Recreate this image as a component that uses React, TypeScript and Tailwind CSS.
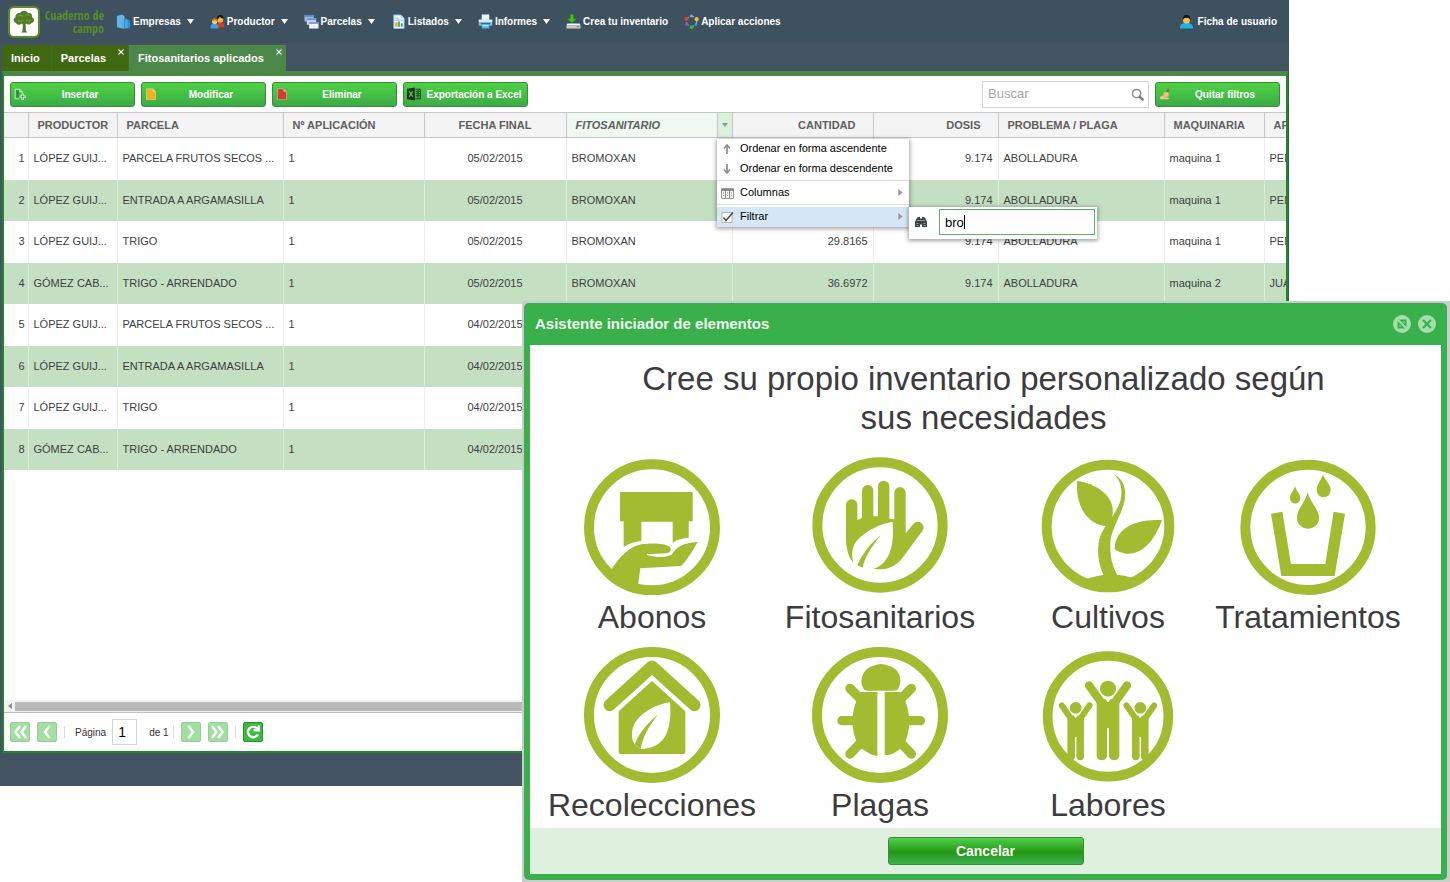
import { useState } from 'react';
import type { ReactNode } from 'react';
import clsx from 'clsx';

type Align = 'left' | 'center' | 'right';

interface Column {
  key: string;
  label: string;
  width: number;
  align: Align;
  active?: boolean;
}

interface Row {
  productor: string;
  parcela: string;
  aplicacion: string;
  fecha: string;
  fito?: string;
  cantidad?: string;
  dosis?: string;
  problema?: string;
  maquinaria?: string;
  aplicador?: string;
}

const COLUMNS: Column[] = [
  { key: 'productor', label: 'PRODUCTOR', width: 89, align: 'left' },
  { key: 'parcela', label: 'PARCELA', width: 166, align: 'left' },
  { key: 'aplicacion', label: 'Nº APLICACIÓN', width: 141, align: 'left' },
  { key: 'fecha', label: 'FECHA FINAL', width: 142, align: 'center' },
  { key: 'fito', label: 'FITOSANITARIO', width: 166, align: 'left', active: true },
  { key: 'cantidad', label: 'CANTIDAD', width: 141, align: 'right' },
  { key: 'dosis', label: 'DOSIS', width: 125, align: 'right' },
  { key: 'problema', label: 'PROBLEMA / PLAGA', width: 166, align: 'left' },
  { key: 'maquinaria', label: 'MAQUINARIA', width: 100, align: 'left' },
  { key: 'aplicador', label: 'APLICADOR', width: 110, align: 'left' },
];

const LOPEZ = 'LÓPEZ GUIJ...';
const GOMEZ = 'GÓMEZ CAB...';
const FRUTOS = 'PARCELA FRUTOS SECOS ...';

const ROWS: Row[] = [
  { productor: LOPEZ, parcela: FRUTOS, aplicacion: '1', fecha: '05/02/2015', fito: 'BROMOXAN', dosis: '9.174', problema: 'ABOLLADURA', maquinaria: 'maquina 1', aplicador: 'PEDRO' },
  { productor: LOPEZ, parcela: 'ENTRADA A ARGAMASILLA', aplicacion: '1', fecha: '05/02/2015', fito: 'BROMOXAN', dosis: '9.174', problema: 'ABOLLADURA', maquinaria: 'maquina 1', aplicador: 'PEDRO' },
  { productor: LOPEZ, parcela: 'TRIGO', aplicacion: '1', fecha: '05/02/2015', fito: 'BROMOXAN', cantidad: '29.8165', dosis: '9.174', problema: 'ABOLLADURA', maquinaria: 'maquina 1', aplicador: 'PEDRO' },
  { productor: GOMEZ, parcela: 'TRIGO - ARRENDADO', aplicacion: '1', fecha: '05/02/2015', fito: 'BROMOXAN', cantidad: '36.6972', dosis: '9.174', problema: 'ABOLLADURA', maquinaria: 'maquina 2', aplicador: 'JUAN' },
  { productor: LOPEZ, parcela: FRUTOS, aplicacion: '1', fecha: '04/02/2015' },
  { productor: LOPEZ, parcela: 'ENTRADA A ARGAMASILLA', aplicacion: '1', fecha: '04/02/2015' },
  { productor: LOPEZ, parcela: 'TRIGO', aplicacion: '1', fecha: '04/02/2015' },
  { productor: GOMEZ, parcela: 'TRIGO - ARRENDADO', aplicacion: '1', fecha: '04/02/2015' },
];

const ALIGN: Record<Align, string> = {
  left: 'text-left',
  center: 'text-center',
  right: 'text-right',
};

/* ---------- small icons ---------- */

function Icon({ children, className = 'size-[15px]' }: { children: ReactNode; className?: string }) {
  return (
    <svg viewBox="0 0 16 16" className={clsx('shrink-0', className)} aria-hidden="true">
      {children}
    </svg>
  );
}

const BuildingIcon = () => (
  <Icon>
    <path d="M1 2l6-1.500v15L1 14z" fill="#5db8ee" />
    <path d="M7 .5L9 3v12.500H7z" fill="#8fd2f6" />
    <path d="M8 4l5 1.500 2 2.500v7.500H8z" fill="#2b8fd0" />
    <path d="M9.500 6l3 1v8h-3z" fill="#4aa9e4" />
  </Icon>
);

const PeopleIcon = () => (
  <Icon>
    <path d="M7.500 14c0-4 1-5 3.500-5s4.500 1 4.500 5z" fill="#e23b1c" />
    <circle cx="11" cy="6" r="3.200" fill="#f4b04a" />
    <path d="M7.500 6c0-4 2-5 3.500-5s3.600 1 3.500 4c-2 0-3-1-4-2-1 1-1 2-3 3z" fill="#1d120c" />
    <path d="M.5 15.500c0-4 1.500-5 4-5s4.500 1 4.500 5z" fill="#3aa0e6" />
    <circle cx="5" cy="8" r="2.800" fill="#fbc766" />
    <path d="M2 7.500C2.200 5 3.500 4.400 5 4.400s3 1 3 3C6 7.500 6 6.500 5 6.300 4 6.500 3.500 7.500 2 7.500z" fill="#c2751c" />
  </Icon>
);

const WindowsIcon = () => (
  <Icon>
    <path d="M.5 1h10v7H.5z" fill="#9fb8dc" />
    <path d="M.5 1h10v2H.5z" fill="#5f86c4" />
    <path d="M3 4.500h10v7H3z" fill="#c6d5ec" />
    <path d="M3 4.500h10v2H3z" fill="#6b90ca" />
    <path d="M5.500 8.500h10v7h-10z" fill="#eef3fa" />
    <path d="M5.500 8.500h10v2h-10z" fill="#7397cf" />
  </Icon>
);

const ReportIcon = () => (
  <Icon>
    <path d="M3 1h7.500L14 4.500v11H3z" fill="#f4fafe" stroke="#7db9e2" />
    <path d="M10.500 1v3.500H14" fill="#b8dcf3" />
    <path d="M4.500 4.500h4M4.500 6.500h8" stroke="#7db9e2" />
    <path d="M4.500 9H7v4.500H4.500z" fill="#e8a32b" />
    <path d="M7.500 8h2v5.500h-2z" fill="#4caf3c" />
    <path d="M10.500 10h2v3.500h-2z" fill="#3a86d0" />
  </Icon>
);

const PrinterIcon = () => (
  <Icon>
    <path d="M4 .5h8V7H4z" fill="#e9f5fd" />
    <path d="M.8 6h14.400v6.500H.8z" fill="#8bb8de" />
    <path d="M.8 6h14.400v2.500H.8z" fill="#dce9f5" />
    <path d="M3 9.500h10V11H3z" fill="#2d6ba8" />
    <path d="M4 11h8v4.500H4z" fill="#4fb6ee" />
    <path d="M5 12.500h6" stroke="#fff" />
  </Icon>
);

const DownloadIcon = () => (
  <Icon>
    <path d="M4.500 .5h3.500v4.500h3L6.250 9.500 1.500 5h3z" fill="#3fc41e" stroke="#2a8d14" strokeWidth=".5" />
    <path d="M1.500 10h13l1 2H.5z" fill="#f7f7f7" />
    <path d="M.5 12h15v3.500H.5z" fill="#c9ccce" />
    <path d="M11.500 13.500h2.500" stroke="#4caf3c" strokeWidth="1.300" />
  </Icon>
);

const CycleIcon = () => (
  <Icon>
    <circle cx="8" cy="8" r="5.500" fill="none" stroke="#7eb6e8" strokeWidth="1.500" strokeDasharray="4 2" />
    <circle cx="2.500" cy="5" r="2.200" fill="#e4402c" />
    <circle cx="8" cy="2" r="1.500" fill="#79b4ea" />
    <circle cx="13.500" cy="5.500" r="2.200" fill="#f2c428" />
    <circle cx="12.500" cy="11.500" r="1.600" fill="#4688d8" />
    <circle cx="8" cy="14" r="2" fill="#3fae32" />
    <circle cx="2.800" cy="11" r="1.600" fill="#7b62c8" />
  </Icon>
);

const UserIcon = () => (
  <Icon>
    <path d="M1 15.500C1 10.500 4 9.500 8 9.500s7 1 7 6z" fill="#1cb5e4" />
    <circle cx="8" cy="6.500" r="3.800" fill="#fbb95a" />
    <path d="M4 6.500C3.600 2 6 1 8 1s5 1 4 5.500C11.500 5 10.500 4.200 8.500 4 6 4.200 5 4.500 4 6.500z" fill="#17120f" />
  </Icon>
);

const FileIcon = ({ fill, fold }: { fill: string; fold: string }) => (
  <Icon className="size-3">
    <path d="M2 1h8l4 4v10.500H2z" fill={fill} stroke="#fff" strokeOpacity=".45" />
    <path d="M10 1v4h4z" fill={fold} />
  </Icon>
);

const InsertIcon = () => (
  <Icon className="size-3">
    <path d="M1.500 1.500h6l3.500 3.500v2.500M7 14.500H1.500v-13M7.500 1.500V5H11" fill="none" stroke="#c8f2c0" strokeWidth="1.200" />
    <path d="M3 3h3.500v9.500H3z" fill="#2d8b3b" />
    <path d="M11.500 7.500v8M7.500 11.500h8" stroke="#e2fadd" strokeWidth="3" />
    <path d="M11.500 8.500v6M8.500 11.500h6" stroke="#3d9a45" />
  </Icon>
);

const ExcelIcon = () => (
  <Icon className="size-[14px]">
    <path d="M0 2l9-1.500v15L0 14z" fill="#20351f" />
    <path d="M2.500 5l4 6M6.500 5l-4 6" stroke="#58c94e" strokeWidth="1.400" />
    <path d="M9.500 2.500h6v11h-6" fill="none" stroke="#20351f" />
    <path d="M10 5h5M10 7.500h5M10 10h5M12.500 3v10" stroke="#20351f" />
  </Icon>
);

const BroomIcon = () => (
  <Icon className="size-3">
    <path d="M11.500 1l2.500-.5L12.500 6 9.500 5z" fill="#c0502a" />
    <path d="M7 6l5.500-.5L13 11l-3 1.500 4 1-2 1.500H2L1 12l4-2z" fill="#f5c982" />
    <path d="M5 11l4-3M7 13.500l4-3" stroke="#c98a3d" />
  </Icon>
);

const TreeLogo = () => (
  <svg viewBox="0 0 32 32" className="size-8 shrink-0" aria-hidden="true">
    <rect x="1" y="1" width="30" height="30" rx="5" fill="#fff" stroke="#5b8c28" strokeWidth="2" />
    <path d="M15 17h2.500l.5 8 1.500 1.500h-6.500L14.500 25z" fill="#55762f" />
    <path d="M8 17c-3-1-3-5-.5-5.500C7 8 10 6.500 12 7c1.500-3 6.500-3 8 0 3-.5 5 2 4 4.500 3 1 2.500 5-.5 5.500-1.500 2-4 2-5.500.5-1 1.500-3.500 1.500-4.500 0C12 19.500 9 19 8 17z" fill="#4f7f22" />
    <path d="M10 10c2-1 4-.5 5 .5M17 9c2-1 4 0 5 1M10 14.500c2 1 4 1 5-.5M18 14c2 1.500 4 1 5 0" fill="none" stroke="#86a95c" strokeWidth=".8" />
  </svg>
);

/* ---------- top bar ---------- */

const NAV = [
  { label: 'Empresas', icon: BuildingIcon, menu: true },
  { label: 'Productor', icon: PeopleIcon, menu: true },
  { label: 'Parcelas', icon: WindowsIcon, menu: true },
  { label: 'Listados', icon: ReportIcon, menu: true },
  { label: 'Informes', icon: PrinterIcon, menu: true },
  { label: 'Crea tu inventario', icon: DownloadIcon, menu: false },
  { label: 'Aplicar acciones', icon: CycleIcon, menu: false },
];

function TopBar() {
  return (
    <header className="flex h-[43px] shrink-0 items-center bg-[#3d515f] pr-3 pl-2 text-[10px] font-bold text-white">
      <div className="flex w-[108px] items-center gap-[3px]">
        <TreeLogo />
        <div className="w-[61px] text-right font-['Open_Sans_Condensed','Lato',sans-serif] text-[12px] leading-[13px] font-bold whitespace-nowrap text-[#5b8c28]">
          <div>Cuaderno de</div>
          <div>campo</div>
        </div>
      </div>
      <nav className="flex items-center gap-4">
        {NAV.map(({ label, icon: NavIcon, menu }) => (
          <button key={label} type="button" className="flex items-center whitespace-nowrap">
            <NavIcon />
            <span className="ml-[2px]">{label}</span>
            {menu && (
              <svg viewBox="0 0 7 5" className="ml-[6px] h-[5px] w-[7px]" aria-hidden="true">
                <path d="M0 0h7L3.500 5z" fill="#fff" />
              </svg>
            )}
          </button>
        ))}
      </nav>
      <button type="button" className="ml-auto flex items-center gap-1 whitespace-nowrap">
        <UserIcon />
        Ficha de usuario
      </button>
    </header>
  );
}

function Tab({ label, active, closable }: { label: string; active?: boolean; closable?: boolean }) {
  return (
    <div className={clsx('relative flex items-center', active ? 'bg-[#4b8748]' : 'border-r border-[#4a6a2a] bg-[#406812]')}>
      <button type="button" className={clsx('h-full pl-[9px] text-[11px] font-bold text-white', closable ? 'pr-[22px]' : 'pr-[11px]')}>
        {label}
      </button>
      {closable && (
        <button type="button" aria-label={`Cerrar ${label}`} className="absolute top-1 right-1">
          <svg viewBox="0 0 6 6" className="size-[6px]" aria-hidden="true">
            <path d="M.5.5l5 5M5.500.5l-5 5" stroke="#fff" strokeWidth="1.100" />
          </svg>
        </button>
      )}
    </div>
  );
}

/* ---------- toolbar ---------- */

function ToolButton({ label, icon }: { label: string; icon: ReactNode }) {
  return (
    <button
      type="button"
      className="flex h-[25px] w-[125px] shrink-0 items-center rounded-[3px] border border-[#3c8a3c] bg-linear-to-b from-[#4fd344] to-[#3bab46] pl-[3px] text-[10px] font-bold text-white"
    >
      {icon}
      <span className="flex-1 text-center whitespace-nowrap">{label}</span>
    </button>
  );
}

function Toolbar() {
  return (
    <div className="flex h-9 shrink-0 items-center gap-[6px] px-[6px]">
      <ToolButton label="Insertar" icon={<InsertIcon />} />
      <ToolButton label="Modificar" icon={<FileIcon fill="#f2b01e" fold="#fbe09a" />} />
      <ToolButton label="Eliminar" icon={<FileIcon fill="#d23f31" fold="#f0a79f" />} />
      <ToolButton label="Exportación a Excel" icon={<ExcelIcon />} />
      <label className="ml-auto flex h-[27px] w-[167px] items-center border border-[#d5d5d5] bg-white pr-1 pl-[5px]">
        <input
          type="text"
          aria-label="Buscar"
          placeholder="Buscar"
          className="min-w-0 flex-1 text-[13px] outline-none placeholder:text-[#a5a5a5]"
        />
        <svg viewBox="0 0 14 14" className="size-[13px]" aria-hidden="true">
          <circle cx="6" cy="6" r="4.500" fill="none" stroke="#8c8c8c" strokeWidth="1.600" />
          <path d="M9.500 9.500l3 3" stroke="#777" strokeWidth="2.600" strokeLinecap="round" />
        </svg>
      </label>
      <ToolButton label="Quitar filtros" icon={<BroomIcon />} />
    </div>
  );
}

/* ---------- grid ---------- */

function Grid() {
  return (
    <table className="w-[1370px] table-fixed border-collapse text-[11px] text-[#404040]">
      <colgroup>
        <col style={{ width: 24 }} />
        {COLUMNS.map((c) => (
          <col key={c.key} style={{ width: c.width }} />
        ))}
      </colgroup>
      <thead>
        <tr className="h-[26px] bg-[#f4f4f4] text-[#606060] shadow-[inset_0_1px_0_#c5c5c5,inset_0_-1px_0_#c5c5c5]">
          <th className="border-r border-[#c5c5c5]" />
          {COLUMNS.map((c) => (
            <th
              key={c.key}
              className={clsx(
                'border-r border-[#c5c5c5] p-0 font-bold whitespace-nowrap',
                ALIGN[c.align],
                c.active && 'bg-[#eefaf0] italic shadow-[inset_0_1px_0_#c5c5c5,inset_0_-1px_0_#c5c5c5]',
              )}
            >
              {c.active ? (
                <div className="flex h-[26px] items-center justify-between pl-[9px]">
                  {c.label}
                  <button type="button" aria-label="Opciones de columna" className="grid h-6 w-[15px] place-items-center border-l border-[#c5c5c5] bg-[#dcf0de]">
                    <svg viewBox="0 0 6 4" className="h-1 w-[6px]" aria-hidden="true">
                      <path d="M0 0h6L3 4z" fill="#8a9a8a" />
                    </svg>
                  </button>
                </div>
              ) : (
                <div className={c.align === 'right' ? 'pr-[17px]' : c.align === 'left' ? 'pl-[9px]' : ''}>{c.label}</div>
              )}
            </th>
          ))}
        </tr>
      </thead>
      <tbody>
        {ROWS.map((row, i) => (
          <tr key={i} className={i % 2 ? 'h-[41px] bg-[#c5dfc3]' : 'h-[42px] bg-white'}>
            <td className={clsx('border-r p-0 pr-[3px] pb-px text-right', i % 2 ? 'border-[#dcebdb]' : 'border-[#ededed]')}>{i + 1}</td>
            {COLUMNS.map((c) => (
              <td
                key={c.key}
                className={clsx('truncate border-r p-0 px-[5px] pb-px', ALIGN[c.align], i % 2 ? 'border-[#dcebdb]' : 'border-[#ededed]')}
              >
                {row[c.key as keyof Row]}
              </td>
            ))}
          </tr>
        ))}
      </tbody>
    </table>
  );
}

const SubArrow = () => (
  <svg viewBox="0 0 5 8" className="ml-auto h-[7px] w-[5px]" aria-hidden="true">
    <path d="M0 0l5 4-5 4z" fill="#9a9a9a" />
  </svg>
);

function ColumnMenu() {
  const [filter, setFilter] = useState('bro');
  const item = 'flex h-5 w-full items-center pr-[6px] pb-px pl-1 text-left text-black';

  return (
    <div className="absolute top-[27px] left-[713px] z-10 flex items-end text-[11px]">
      <div className="w-48 bg-white shadow-[0_1px_4px_1px_rgba(0,0,0,0.35)]">
        <button type="button" className={item}>
          <svg viewBox="0 0 12 12" className="mr-[7px] size-3" aria-hidden="true">
            <path d="M6 11V3M3 5.500L6 2l3 3.500" fill="none" stroke="#8e8e8e" strokeWidth="1.700" />
          </svg>
          Ordenar en forma ascendente
        </button>
        <button type="button" className={item}>
          <svg viewBox="0 0 12 12" className="mr-[7px] size-3" aria-hidden="true">
            <path d="M6 1v8M3 6.500L6 10l3-3.500" fill="none" stroke="#8e8e8e" strokeWidth="1.700" />
          </svg>
          Ordenar en forma descendente
        </button>
        <hr className="mt-px mb-[2px] border-[#dcdcdc]" />
        <button type="button" className={item}>
          <svg viewBox="0 0 13 12" className="mr-[6px] h-3 w-[13px]" aria-hidden="true">
            <path d="M.5 1.500h12v10H.5z" fill="#f5f5f5" stroke="#9a9a9a" />
            <path d="M.5 3h12" stroke="#8a8a8a" strokeWidth="2" />
            <path d="M4.500 3v8M8.500 3v8M2 6h1M2 8.500h1M6 6h1M6 8.500h1M10 6h1M10 8.500h1" stroke="#8a8a8a" />
          </svg>
          Columnas
          <SubArrow />
        </button>
        <hr className="mt-px mb-[2px] border-[#dcdcdc]" />
        <button type="button" className={clsx(item, 'bg-[#d5e6f4]')}>
          <svg viewBox="0 0 13 12" className="mr-[6px] h-3 w-[13px]" aria-hidden="true">
            <path d="M1 1.500h10v10H1z" fill="#fff" stroke="#b4b4b4" />
            <path d="M2.500 6.500L5 9.500 12 1.500" fill="none" stroke="#4a4a4a" strokeWidth="1.600" />
          </svg>
          Filtrar
          <SubArrow />
        </button>
      </div>
      <label className="-mb-3 flex h-8 w-[188px] items-start bg-white pt-[2px] pr-[2px] shadow-[0_1px_4px_1px_rgba(0,0,0,0.35)]">
        <svg viewBox="0 0 12 12" className="mx-[6px] mt-[7px] size-3 shrink-0" aria-hidden="true">
          <path d="M1.500 2.500L3 1h2v1.500h2V1h2l1.500 1.500L12 6v5H7V8.500H5V11H0V6z" fill="#3b4248" />
          <path d="M1.500 7.500h2M8.500 7.500h2M1.500 9.500h2M8.500 9.500h2M2 4.500h8" stroke="#9aa4ac" strokeWidth=".9" />
        </svg>
        <span className="relative ml-[6px] flex min-w-0 flex-1">
          <input
            type="text"
            aria-label="Filtrar fitosanitario"
            value={filter}
            onChange={(e) => setFilter(e.target.value)}
            className="h-[26px] w-full border border-[#5ab56a] bg-white pl-[5px] text-[13px] text-black caret-transparent outline-none"
          />
          <span className="absolute top-[6px] left-[25px] h-[14px] w-px bg-black" />
        </span>
      </label>
    </div>
  );
}

/* ---------- pager ---------- */

function PagerButton({ label, path, enabled }: { label: string; path: string; enabled?: boolean }) {
  return (
    <button
      type="button"
      aria-label={label}
      className={clsx(
        'grid size-5 place-items-center rounded-[2px] border',
        enabled ? 'border-[#2f8a35] bg-[#3dbb40]' : 'border-[#9fc8a0] bg-[#a2dfa3]',
      )}
    >
      <svg viewBox="0 0 16 16" className="size-4" aria-hidden="true">
        <path d={path} fill="none" stroke="#fff" strokeWidth="2.400" />
      </svg>
    </button>
  );
}

const Divider = () => <span className="h-3 w-px bg-[#dadada]" />;

function Pager() {
  return (
    <footer className="flex h-[39px] shrink-0 items-center border-t border-[#c0c0c0] bg-white px-[6px] text-[10px] text-[#333]">
      <div className="flex items-center gap-[7px]">
        <PagerButton label="Primera página" path="M8 2L3.500 8 8 14M14 2L9.500 8l4.500 6" />
        <PagerButton label="Página anterior" path="M10.500 2L6 8l4.500 6" />
        <Divider />
      </div>
      <label className="ml-[10px] flex items-center gap-[6px]">
        Página
        <input type="text" defaultValue="1" className="h-[26px] w-[25px] border border-[#d5d5d5] pl-[5px] text-[14px] text-black outline-none" />
      </label>
      <span className="ml-3">de 1</span>
      <div className="ml-1 flex items-center gap-[7px]">
        <Divider />
        <PagerButton label="Página siguiente" path="M5.500 2L10 8l-4.500 6" />
        <PagerButton label="Última página" path="M2 2l4.500 6L2 14M8 2l4.500 6L8 14" />
        <Divider />
        <PagerButton label="Actualizar" path="M12.300 4.800A5.200 5.200 0 1 0 12.800 10.500M13.800 1.500V6.300H8.500" enabled />
      </div>
    </footer>
  );
}

/* ---------- inventory wizard ---------- */

const GREEN = '#a2bb31';

const AbonosArt = () => (
  <svg viewBox="43 57 408 408" className="size-[136px]" aria-hidden="true">
    <circle cx="247" cy="262" r="189" fill="none" stroke={GREEN} strokeWidth="30" />
    <g fill={GREEN}>
      <path d="M151 156H369V244H357V294Q330 294 309 308V245H215V303Q184 306 162 321V244H151z" />
      <path d="M122 394C150 348 180 320 215 313C250 308 285 310 300 320C308 330 300 338 290 340L234 343C260 350 290 350 306 344C320 322 340 308 384 306C370 330 350 365 334 378L212 385L205 436C196 450 160 440 122 394z" />
    </g>
    <path d="M232 343C262 350 296 352 305 338" fill="none" stroke="#fff" strokeWidth="4" />
  </svg>
);

const FitosanitariosArt = () => (
  <svg viewBox="726 57 408 408" className="size-[136px] overflow-visible" aria-hidden="true">
    <circle cx="930" cy="255" r="188" fill="none" stroke={GREEN} strokeWidth="30" />
    <path
      d="M828 195a17 17 0 0 1 34 0V240L876 234V152a17 17 0 0 1 34 0V229H924V139a17 17 0 0 1 34 0V236L973 238V158a17 17 0 0 1 34 0V280L1030 252a17 17 0 0 1 27 21L1000 350C975 385 940 392 912 386L848 366C830 345 828 310 828 290z"
      fill={GREEN}
    />
    <path d="M968 246C930 250 870 280 852 315C845 335 845 350 850 368L862 376L885 384L911 386C945 375 975 340 968 246z" fill="#fff" />
    <path d="M932 286C905 305 875 345 862 376L878 383C884 352 905 320 932 286z" fill={GREEN} />
  </svg>
);

const CultivosArt = () => (
  <svg viewBox="92 57 408 408" className="size-[136px]" aria-hidden="true">
    <circle cx="296" cy="258" r="184" fill="none" stroke={GREEN} strokeWidth="30" />
    <g fill={GREEN}>
      <path d="M204 122C260 132 315 165 310 220Q308 240 300 258C240 262 195 200 204 122z" />
      <path d="M458 240C440 290 405 345 350 341Q325 337 316 327C315 285 350 235 458 240z" />
      <path d="M314 102C342 118 352 145 346 180C338 225 305 265 303 310C302 350 308 380 325 406H283C265 370 262 325 272 290C285 255 320 225 334 180C340 145 334 122 314 102z" />
      <path d="M230 418Q262 404 300 404Q340 403 372 414Q340 440 296 440Q260 438 230 418z" />
    </g>
  </svg>
);

const TratamientosArt = () => (
  <svg viewBox="689 57 408 408" className="size-[136px]" aria-hidden="true">
    <circle cx="893" cy="262" r="188" fill="none" stroke={GREEN} strokeWidth="30" />
    <g fill={GREEN}>
      <path d="M782 221L816 215L842 372H945L970 215L1004 221L973 408H813z" />
      <path d="M892 155C897 185 926 205 926 235a33 31 0 0 1-66 0C860 205 887 185 892 155z" />
      <path d="M854 137C857 153 870 160 870 174a15 16 0 0 1-31 0C839 160 851 153 854 137z" />
      <path d="M938 102C942 120 961 132 961 150a21 22 0 0 1-42 0C919 132 934 120 938 102z" />
    </g>
  </svg>
);

const RecoleccionesArt = () => (
  <svg viewBox="136 36 408 408" className="size-[136px]" aria-hidden="true">
    <circle cx="340" cy="240" r="189" fill="none" stroke={GREEN} strokeWidth="30" />
    <path d="M213 210L340 95L467 210" fill="none" stroke={GREEN} strokeWidth="37" strokeLinecap="round" strokeLinejoin="round" />
    <path d="M340 138L440 229V350Q440 357 432 357H248Q240 357 240 350V229z" fill={GREEN} />
    <path d="M394 202C345 210 290 240 281 285C278 305 281 318 288 328L306 342C340 342 370 328 384 295C395 265 397 235 394 202z" fill="#fff" />
    <path d="M358 239C330 260 300 295 288 328L306 341C312 308 330 272 358 239z" fill={GREEN} />
  </svg>
);

const PlagasArt = () => (
  <svg viewBox="818 36 408 408" className="size-[136px]" aria-hidden="true">
    <circle cx="1022" cy="240" r="189" fill="none" stroke={GREEN} strokeWidth="30" />
    <path
      d="M932 160L965 193M1116 160L1083 193M908 257H955M1143 257H1095M932 357L965 322M1116 357L1083 322"
      stroke={GREEN}
      strokeWidth="28"
      strokeLinecap="round"
    />
    <g fill={GREEN}>
      <path d="M975 165C955 135 973 98 1003 92Q1025 82 1047 92C1078 98 1095 135 1074 165Q1068 167 1060 167H988Q980 167 975 165z" />
      <path d="M966 171H1014V363Q998 362 978 348L962 338C930 292 934 215 966 171z" />
      <path d="M1036 171H1083C1115 215 1120 292 1088 338L1070 350Q1055 361 1036 360z" />
    </g>
  </svg>
);

/* one person with raised arms, drawn around x = 0 */
const Worker = ({ transform }: { transform: string }) => (
  <g transform={transform}>
    <circle cx="0" cy="23" r="24" fill={GREEN} />
    <path d="M-57 13L-20 65M57 13L20 65" stroke={GREEN} strokeWidth="25" strokeLinecap="round" />
    <path d="M-34 60L-8 54L0 64L8 54L34 60V226a16 16 0 0 1-31 0V142H-3V226a16 16 0 0 1-31 0z" fill={GREEN} />
    <path d="M-7 50L0 62L7 50" fill="none" stroke="#fff" strokeWidth="3" />
  </g>
);

const LaboresArt = () => (
  <svg viewBox="87 36 408 408" className="size-[136px]" aria-hidden="true">
    <circle cx="291" cy="244" r="181" fill="none" stroke={GREEN} strokeWidth="29" />
    <Worker transform="translate(291 138)" />
    <Worker transform="translate(194 202) scale(.73)" />
    <Worker transform="translate(388 202) scale(.73)" />
  </svg>
);

const ELEMENTS = [
  { label: 'Abonos', art: AbonosArt },
  { label: 'Fitosanitarios', art: FitosanitariosArt },
  { label: 'Cultivos', art: CultivosArt },
  { label: 'Tratamientos', art: TratamientosArt },
  { label: 'Recolecciones', art: RecoleccionesArt },
  { label: 'Plagas', art: PlagasArt },
  { label: 'Labores', art: LaboresArt },
];

function WizardDialog() {
  return (
    <div className="absolute top-[301px] right-0 bottom-0 left-[36%] z-20 bg-[#c9cbcd] pt-[2px] pr-[3px] pb-[2px] pl-[2px]">
      <section role="dialog" aria-label="Asistente iniciador de elementos" className="flex h-full flex-col rounded-[5px] bg-[#39b04b] px-[6px] pb-[6px]">
        <div className="flex h-[42px] shrink-0 items-center gap-[7px] px-[5px]">
          <h2 className="flex-1 text-[15px] font-bold text-[#f0fbef]">Asistente iniciador de elementos</h2>
          <button type="button" aria-label="Restaurar">
            <svg viewBox="0 0 18 18" className="size-[18px]" aria-hidden="true">
              <circle cx="9" cy="9" r="9" fill="#a3dfa8" />
              <path d="M4.500 4.500h9v9h-9z" fill="#39b04b" />
              <path d="M4 4l10 10" stroke="#a3dfa8" strokeWidth="2" />
              <path d="M6.500 9.500v2h2zM9.500 6.500h2v2z" fill="#a3dfa8" />
            </svg>
          </button>
          <button type="button" aria-label="Cerrar">
            <svg viewBox="0 0 18 18" className="size-[18px]" aria-hidden="true">
              <circle cx="9" cy="9" r="9" fill="#a3dfa8" />
              <path d="M5 5l8 8M13 5l-8 8" stroke="#39b04b" strokeWidth="2.200" />
            </svg>
          </button>
        </div>
        <div className="flex-1 bg-white pt-[14px] text-[#3c3c3e]">
          <h3 className="mx-auto max-w-[720px] pr-1 text-center text-[33px] leading-[39px]">
            Cree su propio inventario personalizado según sus necesidades
          </h3>
          <div className="mt-[22px] grid grid-cols-[minmax(0,228fr)_minmax(0,228fr)_minmax(0,228fr)_minmax(0,172fr)] gap-y-3 pr-[47px] pl-2 text-[32px]">
            {ELEMENTS.map(({ label, art: Art }) => (
              <button key={label} type="button" className="flex flex-col items-center whitespace-nowrap">
                <Art />
                <span className="mt-1 leading-9">{label}</span>
              </button>
            ))}
          </div>
        </div>
        <div className="flex h-[46px] shrink-0 items-center justify-center bg-[#dff0de]">
          <button
            type="button"
            className="h-7 w-[196px] rounded-[3px] border border-[#3f8a3f] bg-linear-to-b from-[#4ccb45] from-5% via-[#23960f] via-55% to-[#3bb24a] text-[14px] font-bold text-white"
          >
            Cancelar
          </button>
        </div>
      </section>
    </div>
  );
}

export default function App() {
  return (
    <div className="relative h-screen overflow-hidden bg-white font-['Liberation_Sans',Arial,sans-serif]">
      <div className="mr-[161px] flex h-[calc(100%-96px)] flex-col bg-[#445362]">
        <TopBar />
        <div className="ml-[2px] flex h-7 shrink-0 pt-[2px]">
          <Tab label="Inicio" />
          <Tab label="Parcelas" closable />
          <Tab label="Fitosanitarios aplicados" active closable />
        </div>
        <main className="mx-[2px] mr-px mb-[33px] flex min-h-0 flex-1 flex-col border-2 border-t-[5px] border-[#1b8a24] border-t-[#4b8745] bg-white">
          <Toolbar />
          <div className="relative min-h-0 flex-1">
            <div className="h-full overflow-hidden">
              <Grid />
            </div>
            <ColumnMenu />
          </div>
          <div className="flex h-3 shrink-0 items-center bg-[#f3f3f3] pl-1">
            <svg viewBox="0 0 4 6" className="mr-[3px] h-[6px] w-1" aria-hidden="true">
              <path d="M4 0v6L0 3z" fill="#8c8c8c" />
            </svg>
            <div className="h-[9px] w-[85%] bg-[#b9b9b9]" />
          </div>
          <Pager />
        </main>
      </div>
      <WizardDialog />
    </div>
  );
}
